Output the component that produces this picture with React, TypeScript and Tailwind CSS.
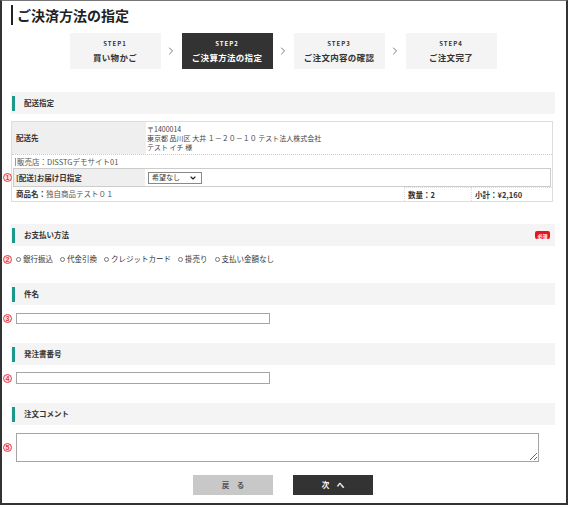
import { Fragment } from "react"
import { ChevronRight, ChevronDown } from "lucide-react"

const steps = [
  { label: "STEP1", name: "買い物かご" },
  { label: "STEP2", name: "ご決算方法の指定", active: true },
  { label: "STEP3", name: "ご注文内容の確認" },
  { label: "STEP4", name: "ご注文完了" },
]

const payments = ["銀行振込", "代金引換", "クレジットカード", "掛売り", "支払い金額なし"]

function SectionHead({ title, required }: { title: string; required?: boolean }) {
  return (
    <div className="flex h-[22px] items-center bg-[#f4f4f4]">
      <span className="ml-[1px] h-[15px] w-[3px] bg-[#1d998b]" />
      <span className="ml-[9px] text-[7.5px] font-bold text-[#333]">{title}</span>
      {required && (
        <span className="ml-auto mr-[5px] flex h-[8px] w-[15px] items-center justify-center rounded-[2px] bg-[#e8141c] text-[5px] font-bold leading-none text-white">
          必須
        </span>
      )}
    </div>
  )
}

// red circled marker, drawn as a small pink disc with the digit
function Mark({ n }: { n: number }) {
  return (
    <span className="flex h-[9px] w-[9px] shrink-0 items-center justify-center rounded-full border border-[#e8383d] bg-[#fde6e6] font-['Liberation_Sans',sans-serif] text-[7px] font-bold leading-none text-[#e8383d]">
      {n}
    </span>
  )
}

function Num({ n }: { n: number }) {
  return (
    <span className="flex w-[13px] shrink-0 justify-start pl-[-1px]">
      <Mark n={n} />
    </span>
  )
}

export default function App() {
  return (
    <div className="h-[508px] w-[570px] bg-white font-['Noto_Sans_CJK_JP','Noto_Sans',sans-serif] text-[#333]">
      <div className="flex h-[505px] w-[568px] flex-col border-2 border-t border-[#333] border-t-[#777] pl-[9px] pr-[11px]">
        {/* title */}
        <div className="mt-[4px] flex h-[20px] items-center">
          <span className="h-[20px] w-[2px] bg-[#222]" />
          <h1 className="ml-[4px] text-[14px] font-bold leading-[20px] text-[#222]">ご決済方法の指定</h1>
        </div>

        {/* steps */}
        <div className="mt-[8px] flex justify-center">
          {steps.map((s, i) => (
            <Fragment key={s.label}>
              {i > 0 && (
                <div className="flex w-[21px] items-center justify-center">
                  <ChevronRight size={12} strokeWidth={1.3} className="text-[#333]" />
                </div>
              )}
              <div
                className={
                  s.active
                    ? "flex h-[36px] w-[91px] flex-col items-center justify-center bg-[#333] text-white"
                    : "flex h-[36px] w-[91px] flex-col items-center justify-center bg-[#f4f4f4] text-[#333]"
                }
              >
                <span className="text-[6px] font-bold leading-[10px] tracking-[1px]">{s.label}</span>
                <span className="mt-[2px] text-[8.5px] font-bold leading-[12px] tracking-[0.3px]">{s.name}</span>
              </div>
            </Fragment>
          ))}
        </div>

        {/* delivery */}
        <div className="mt-[23px]">
          <SectionHead title="配送指定" />
        </div>
        <div className="mr-[2px] mt-[7px] border border-[#ddd] text-[7.5px] text-[#333]">
          <div className="flex h-[33px] border-b border-dotted border-[#ccc]">
            <div className="flex w-[134px] items-center bg-[#efefef] pl-[4px] font-bold">配送先</div>
            <div className="flex flex-col justify-center pl-[1px] text-[7px] leading-[9px] text-[#444]">
              <span>〒1400014</span>
              <span>東京都 品川区 大井 １－２０－１０ テスト法人株式会社</span>
              <span>テスト イチ 様</span>
            </div>
          </div>
          <div className="flex h-[13px] items-center pl-[3px]">
            <span className="mr-[1px] h-[8px] w-[1px] bg-[#999]" />
            <span className="text-[#555]">販売店：DISSTGデモサイト01</span>
          </div>
          <div className="relative mx-[1px] flex h-[19px] border border-[#ccc]">
            <span className="absolute -left-[11px] top-[4px]">
              <Mark n={1} />
            </span>
            <div className="flex w-[131px] items-center bg-[#efefef] pl-[2px] font-bold">[配送]お届け日指定</div>
            <div className="flex items-center pl-[3px]">
              <div className="flex h-[12px] w-[54px] items-center justify-between border border-[#888] bg-white pl-[3px] pr-[4px] text-[7px]">
                希望なし
                <ChevronDown size={8} strokeWidth={3.5} className="text-[#222]" />
              </div>
            </div>
          </div>
          <div className="flex h-[14px]">
            <div className="flex flex-1 items-center pl-[4px]">
              <span className="font-bold">商品名：</span>
              <span className="text-[#555]">独自商品テスト０１</span>
            </div>
            <div className="flex w-[67px] items-center border-l border-t border-dotted border-[#ddd] pl-[3px] font-bold">数量：2</div>
            <div className="flex w-[81px] items-center border-l border-t border-dotted border-[#ddd] pl-[3px] font-bold">小計：¥2,160</div>
          </div>
        </div>

        {/* payment */}
        <div className="mt-[22px]">
          <SectionHead title="お支払い方法" required />
        </div>
        <div className="-ml-[8px] mt-[7px] flex h-[12px] items-center text-[7.5px] text-[#333]">
          <Num n={2} />
          {payments.map((p) => (
            <label key={p} className="mr-[7px] flex items-center">
              <span className="h-[5px] w-[5px] rounded-full border border-[#777] bg-white" />
              <span className="ml-[2px]">{p}</span>
            </label>
          ))}
        </div>

        {/* subject */}
        <div className="mt-[18px]">
          <SectionHead title="件名" />
        </div>
        <div className="-ml-[8px] mt-[8px] flex items-center">
          <Num n={3} />
          <input className="h-[11px] w-[254px] border border-[#a5a5a5] bg-white" />
        </div>

        {/* order number */}
        <div className="mt-[19px]">
          <SectionHead title="発注書番号" />
        </div>
        <div className="-ml-[8px] mt-[7px] flex items-center">
          <Num n={4} />
          <input className="h-[12px] w-[254px] border border-[#a5a5a5] bg-white" />
        </div>

        {/* comment */}
        <div className="mt-[19px]">
          <SectionHead title="注文コメント" />
        </div>
        <div className="-ml-[8px] mt-[8px] flex items-center">
          <Num n={5} />
          <textarea className="h-[29px] w-[523px] resize border border-[#a5a5a5] bg-white" />
        </div>

        {/* buttons */}
        <div className="mt-[13px] flex justify-center gap-[20px]">
          <button className="h-[20px] w-[80px] bg-[#c8c8c8] text-[7.5px] font-bold text-[#555]">戻　る</button>
          <button className="h-[20px] w-[80px] bg-[#333] text-[7.5px] font-bold text-white">次　へ</button>
        </div>
      </div>
    </div>
  )
}
